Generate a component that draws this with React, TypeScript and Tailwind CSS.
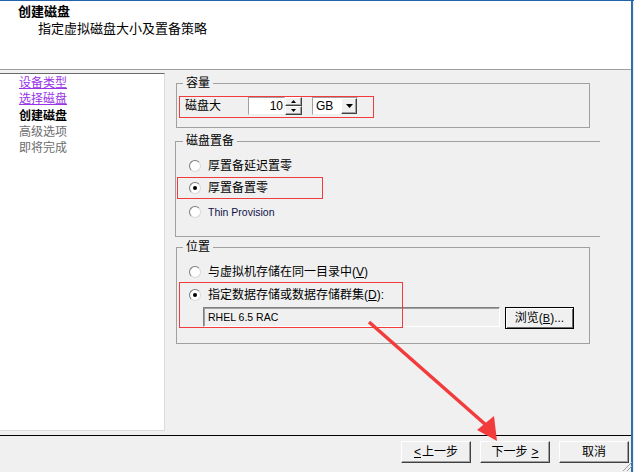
import React from "react";

type Kid = { children?: React.ReactNode; className?: string };

// classic raised button
const WinButton = ({ children, className = "" }: Kid) => (
  <div
    className={`flex items-center justify-center bg-[#f0f0f0] border border-t-white border-l-white border-r-[#404040] border-b-[#404040] shadow-[inset_-1px_-1px_0_#a0a0a0] ${className}`}
  >
    {children}
  </div>
);

const Radio = ({ checked = false }: { checked?: boolean }) => (
  <span className="flex items-center justify-center w-[12px] h-[12px] shrink-0 rounded-full bg-white border border-t-[#7a7a7a] border-l-[#7a7a7a] border-r-[#d8d8d8] border-b-[#d8d8d8]">
    {checked && <span className="w-[4px] h-[4px] rounded-full bg-black" />}
  </span>
);

const RadioRow = ({
  checked,
  children,
  className = "",
}: Kid & { checked?: boolean }) => (
  <div className={`flex items-center h-[16px] gap-[7px] ${className}`}>
    <Radio checked={checked} />
    <span className="leading-[16px]">{children}</span>
  </div>
);

const Arrow = ({ up }: { up?: boolean }) => (
  <svg width="5" height="3" viewBox="0 0 5 3">
    <polygon points={up ? "2.5,0 5,3 0,3" : "0,0 5,0 2.5,3"} fill="#000" />
  </svg>
);

const steps = [
  { label: "设备类型", kind: "link" },
  { label: "选择磁盘", kind: "link" },
  { label: "创建磁盘", kind: "current" },
  { label: "高级选项", kind: "todo" },
  { label: "即将完成", kind: "todo" },
];

export default function App() {
  return (
    <div className="relative w-[634px] h-[472px] overflow-hidden bg-[#f0f0f0] text-[12px] text-black font-['Liberation_Sans','Noto_Sans_CJK_SC',sans-serif]">
      <div className="h-[1px] bg-[#2364ad]" />
      <div className="flex h-[471px]">
        <div className="w-[631px] flex flex-col">
          {/* header */}
          <div className="h-[69px] bg-white border-b border-[#a0a0a0] pt-[3px]">
            <div className="pl-[18px] text-[13px] leading-[16px] font-bold">创建磁盘</div>
            <div className="pl-[38px] mt-[1px] text-[13px] leading-[16px]">指定虚拟磁盘大小及置备策略</div>
          </div>

          {/* middle */}
          <div className="flex h-[365px]">
            <div className="mt-[3px] w-[165px] h-[358px] bg-white border-t border-[#696969] border-r border-r-[#dcdcdc] border-b border-b-[#dcdcdc] pl-[19px] pt-[1px]">
              {steps.map((s) => (
                <div
                  key={s.label}
                  className={`leading-[16.3px] ${
                    s.kind === "link"
                      ? "text-[#9a33e6] underline"
                      : s.kind === "current"
                      ? "font-bold"
                      : "text-[#6d6d6d]"
                  }`}
                >
                  {s.label}
                </div>
              ))}
            </div>

            <div className="flex flex-col pl-[10px]">
              {/* 容量 */}
              <fieldset className="ml-[1px] mt-[6px] w-[414px] h-[52px] border border-[#a0a0a0]">
                <legend className="ml-[6px] px-[3px] leading-[14px]">容量</legend>
                <div className="flex items-center pl-[8px] pt-[7px]">
                  <span className="w-[63px] leading-[18px]">磁盘大</span>
                  <div className="flex h-[18px]">
                    <div className="w-[37px] h-[18px] bg-white border border-t-[#a0a0a0] border-l-[#a0a0a0] border-r-[#f0f0f0] border-b-[#f0f0f0] flex items-center justify-end pr-[1px] leading-[16px]">
                      10
                    </div>
                    <div className="w-[17px] flex flex-col">
                      <WinButton className="h-[9px]">
                        <Arrow up />
                      </WinButton>
                      <WinButton className="h-[9px]">
                        <Arrow />
                      </WinButton>
                    </div>
                  </div>
                  <div className="ml-[10px] w-[46px] h-[18px] bg-white border border-t-[#a0a0a0] border-l-[#a0a0a0] border-r-[#f0f0f0] border-b-[#f0f0f0] flex items-center justify-between">
                    <span className="pl-[3px] leading-[16px]">GB</span>
                    <WinButton className="w-[16px] h-[16px]">
                      <svg width="7" height="4" viewBox="0 0 7 4">
                        <polygon points="0,0 7,0 3.5,4" fill="#000" />
                      </svg>
                    </WinButton>
                  </div>
                </div>
              </fieldset>

              {/* 磁盘置备 */}
              <fieldset className="mt-[6px] w-[425px] h-[103px] border-t border-l border-b border-[#a0a0a0]">
                <legend className="ml-[7px] px-[3px] leading-[14px]">磁盘置备</legend>
                <div className="pl-[13px] pt-[10px]">
                  <RadioRow>厚置备延迟置零</RadioRow>
                  <RadioRow checked className="mt-[6px]">
                    厚置备置零
                  </RadioRow>
                  <RadioRow className="mt-[8px] text-[10.5px] text-[#10104a]">Thin Provision</RadioRow>
                </div>
              </fieldset>

              {/* 位置 */}
              <fieldset className="ml-[1px] mt-[3px] w-[414px] h-[104px] border border-[#a0a0a0]">
                <legend className="ml-[6px] px-[3px] leading-[14px]">位置</legend>
                <div className="pl-[12px] pt-[10px]">
                  <RadioRow>
                    与虚拟机存储在同一目录中(<span className="underline">V</span>)
                  </RadioRow>
                  <RadioRow checked className="mt-[7px]">
                    指定数据存储或数据存储群集(<span className="underline">D</span>):
                  </RadioRow>
                  <div className="flex items-start mt-[4px] ml-[14px]">
                    <div className="w-[297px] h-[20px] border border-t-[#808080] border-l-[#808080] border-r-white border-b-white shadow-[inset_1px_1px_0_#a0a0a0] flex items-center pl-[4px] text-[10.5px] leading-[18px]">
                      RHEL 6.5 RAC
                    </div>
                    <div className="ml-[5px] w-[69px] h-[22px] border border-black flex items-center justify-center bg-[#f0f0f0] shadow-[inset_1px_1px_0_#fff,inset_-1px_-1px_0_#696969]">
                      浏览(<span className="underline text-[11px]">B</span>)...
                    </div>
                  </div>
                </div>
              </fieldset>
            </div>
          </div>

          {/* footer */}
          <div className="h-[37px] border-t border-black flex justify-end gap-[9px] pr-[2px] pt-[5px]">
            <WinButton className="w-[70px] h-[22px]">
              <span className="underline">&lt;</span>
              <span className="ml-[1px]">上一步</span>
            </WinButton>
            <WinButton className="w-[70px] h-[22px]">
              <span>下一步</span>
              <span className="ml-[4px] underline">&gt;</span>
            </WinButton>
            <WinButton className="w-[70px] h-[22px]">取消</WinButton>
          </div>
        </div>
        <div className="w-[2px] bg-[#2f6fae]" />
        <div className="w-[1px] bg-[#f0f0f0]" />
      </div>

      {/* annotations */}
      <div className="absolute left-[179px] top-[96px] w-[195px] h-[22px] border border-[#f03c3c]" />
      <div className="absolute left-[177px] top-[177px] w-[146px] h-[22px] border border-[#f03c3c]" />
      <div className="absolute left-[179px] top-[282px] w-[224px] h-[46px] border border-[#f03c3c]" />
      <svg className="absolute left-0 top-0 pointer-events-none" width="634" height="472" viewBox="0 0 634 472">
        <line x1="369" y1="322" x2="486" y2="425" stroke="#f23c3c" strokeWidth="3.5" />
        <polygon points="497,441 477,430 494,416" fill="#f23c3c" />
        <g stroke="#a0a0a0" strokeWidth="1">
          <line x1="623" y1="471" x2="632" y2="462" />
          <line x1="627" y1="471" x2="632" y2="466" />
        </g>
      </svg>
    </div>
  );
}
